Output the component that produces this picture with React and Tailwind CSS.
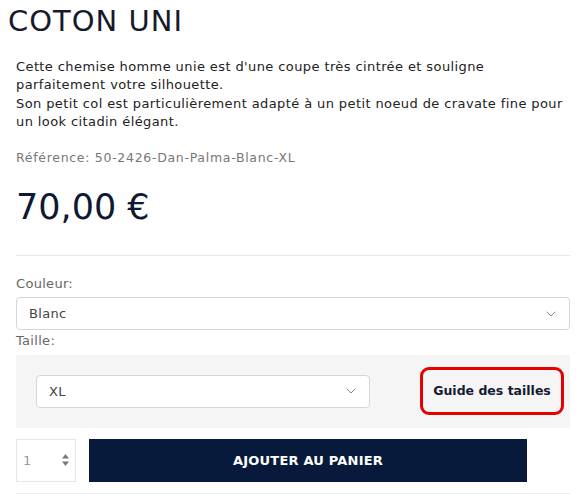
import React from "react";
import { ChevronDown } from "lucide-react";

const font = { fontFamily: '"DejaVu Sans", "Noto Sans", sans-serif' };

const Select = ({ value, className }) => (
  <div
    className={`flex items-center justify-between bg-white border border-[#d6d6d6] rounded-[4px] h-[33px] pl-[12px] pr-[10px] ${className}`}
  >
    <span className="text-[13px] text-[#444] tracking-[0.3px]">{value}</span>
    <ChevronDown className="w-[16px] h-[16px] text-[#888]" strokeWidth={1.5} />
  </div>
);

export default function App() {
  return (
    <div className="bg-white w-[587px] h-[494px] overflow-hidden" style={font}>
      <h1 className="pl-[8px] pt-[4px] text-[29px] leading-[35px] text-[#161a2b] tracking-[1px]">
        COTON UNI
      </h1>

      <div className="px-[16px] w-[570px]">
        <p className="mt-[19px] text-[13px] leading-[17.5px] text-[#222] tracking-[0.4px] whitespace-nowrap">
          Cette chemise homme unie est d'une coupe très cintrée et souligne
          <br />
          parfaitement votre silhouette.
          <br />
          <span className="block mt-[2px]">
            Son petit col est particulièrement adapté à un petit noeud de
            cravate fine pour
            <br />
            un look citadin élégant.
          </span>
        </p>

        <p className="mt-[19px] text-[12.5px] text-[#777] tracking-[0.7px]">
          Référence: 50-2426-Dan-Palma-Blanc-XL
        </p>

        <div className="mt-[17px] text-[35px] leading-[44px] text-[#0f1933]">
          70,00 €
        </div>

        <div className="mt-[26px] border-t border-[#e8e8e8] w-[554px]" />

        <div className="mt-[18px] text-[13px] text-[#666] tracking-[0.3px]">
          Couleur:
        </div>
        <Select value="Blanc" className="mt-[4px] w-[554px]" />
        <div className="mt-[1px] text-[13px] text-[#666] tracking-[0.3px]">
          Taille:
        </div>

        <div className="mt-[4px] bg-[#f5f5f6] w-[554px] h-[73px] flex items-center pl-[20px] pr-[6px]">
          <Select value="XL" className="w-[334px]" />
          <div className="ml-auto h-[48px] w-[144px] flex items-center justify-center border-[3px] border-[#e60000] rounded-[9px]">
            <span className="text-[12.5px] font-semibold text-[#151a2e]">
              Guide des tailles
            </span>
          </div>
        </div>

        <div className="mt-[11px] flex gap-[13px]">
          <div className="w-[60px] h-[43px] border border-[#e5e5e5] flex items-center justify-between pl-[6px] pr-[5px]">
            <span className="text-[13px] text-[#999]">1</span>
            <svg width="9" height="14" viewBox="0 0 9 14">
              <path d="M4.5 1 L8 5.5 H1 Z" fill="#777" />
              <path d="M4.5 13 L8 8.5 H1 Z" fill="#777" />
            </svg>
          </div>
          <div className="w-[438px] h-[43px] bg-[#081a3b] flex items-center justify-center">
            <span className="text-[13px] font-semibold text-white tracking-[0.2px]">
              AJOUTER AU PANIER
            </span>
          </div>
        </div>

        <div className="mt-[11px] border-t border-[#e8e8e8] w-[554px]" />
      </div>
    </div>
  );
}
